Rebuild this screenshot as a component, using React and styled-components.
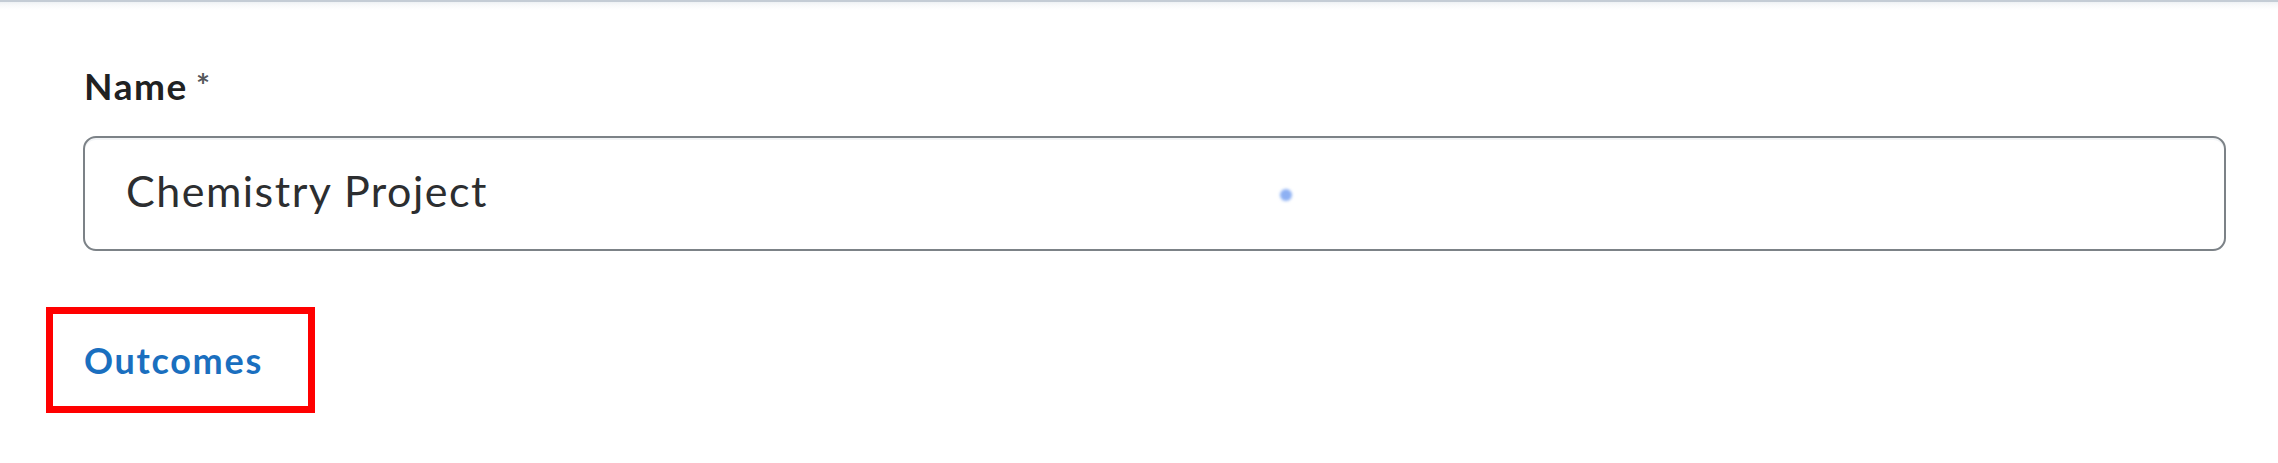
import React from "react";
import styled, { createGlobalStyle } from "styled-components";

const GlobalStyle = createGlobalStyle`
	html, body {
		margin: 0;
		padding: 0;
		background: #ffffff;
	}
	body {
		font-family: "Lato", "Noto Sans", sans-serif;
	}
`;

const Page = styled.div`
	position: relative;
	width: 2278px;
	height: 463px;
	overflow: hidden;
	background: #ffffff;
`;

const TopEdge = styled.div`
	height: 10px;
	border-top: 2px solid #c4ccd5;
	box-sizing: border-box;
	background: linear-gradient(to bottom, #eef1f4 0%, #f8f9fa 40%, #ffffff 100%);
`;

const Form = styled.form`
	display: flex;
	flex-direction: column;
	align-items: stretch;
	padding: 54px 52px 0 83px;
`;

const Label = styled.label`
	font-size: 37px;
	line-height: 42px;
	font-weight: 700;
	letter-spacing: 1.6px;
	color: #202122;
	margin-left: 1px;
	.required {
		color: #55585b;
		font-weight: 700;
		margin-left: 8px;
		font-size: 33px;
		vertical-align: 2px;
	}
`;

const TextInput = styled.input`
	margin-top: 29px;
	height: 115px;
	box-sizing: border-box;
	border: 2px solid #7c8287;
	border-radius: 13px;
	padding: 0 0 6px 41px;
	font-family: "Lato", "Noto Sans", sans-serif;
	font-size: 43px;
	letter-spacing: 1.5px;
	color: #2c2e30;
	background: #ffffff;
	box-shadow: inset 0 2px 0 0 #f2f4f6;
	outline: none;
`;

const Highlight = styled.div`
	margin: 56px 0 0 -37px;
	width: 269px;
	height: 106px;
	box-sizing: border-box;
	border: 7px solid #ff0000;
	display: flex;
	align-items: center;
	padding-left: 31px;
`;

const OutcomesLink = styled.a`
	font-size: 36px;
	line-height: 43px;
	font-weight: 700;
	letter-spacing: 1.7px;
	color: #1a6fbf;
	text-decoration: none;
	cursor: pointer;
`;

const CursorDot = styled.span`
	position: absolute;
	left: 1280px;
	top: 189px;
	width: 12px;
	height: 12px;
	border-radius: 50%;
	background: #8db0f3;
	filter: blur(1.5px);
`;

const App = () => {
	return (
		<Page>
			<GlobalStyle />
			<TopEdge />
			<Form onSubmit={(e) => e.preventDefault()}>
				<Label htmlFor="name-input">
					Name<span className="required">*</span>
				</Label>
				<TextInput id="name-input" type="text" defaultValue="Chemistry Project" />
				<Highlight>
					<OutcomesLink>Outcomes</OutcomesLink>
				</Highlight>
			</Form>
			<CursorDot />
		</Page>
	);
};

export default App;
